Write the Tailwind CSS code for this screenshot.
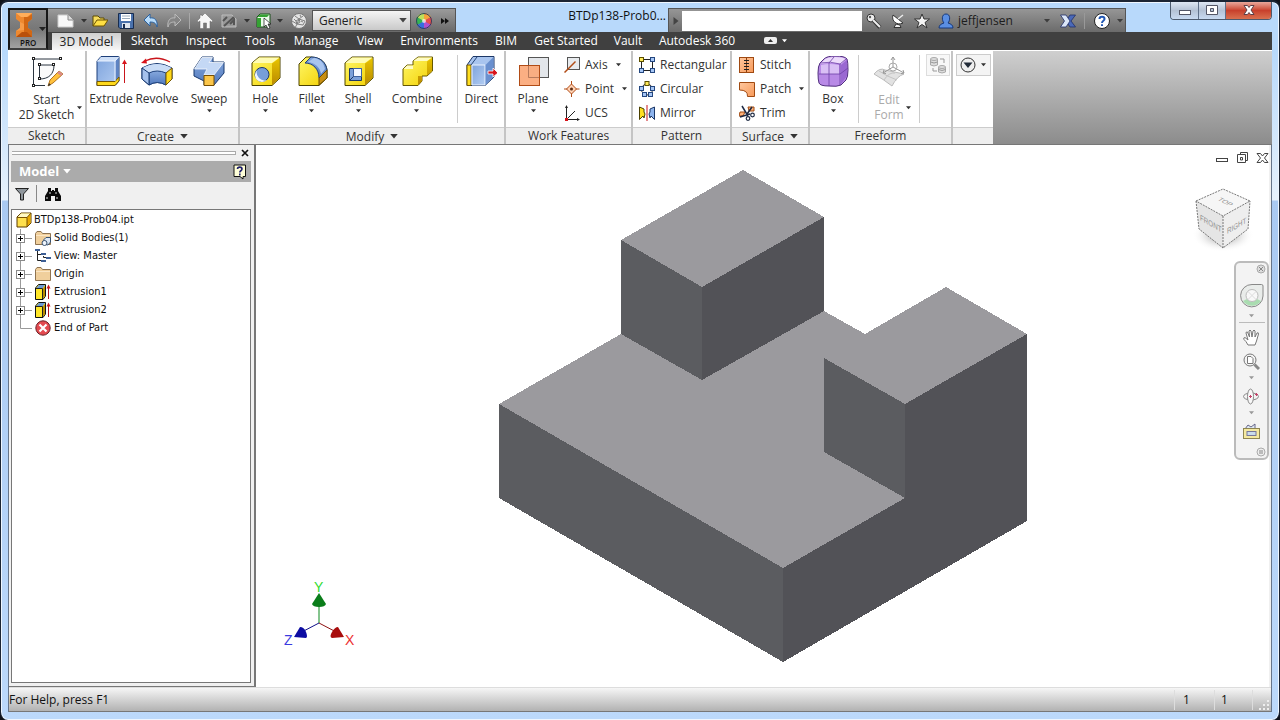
<!DOCTYPE html>
<html lang="en">
<head>
<meta charset="utf-8">
<title>BTDp138-Prob04</title>
<script src="https://cdn.jsdelivr.net/npm/@tailwindcss/browser@4"></script>
</head>
<body class="bg-[#10131a] font-['Open_Sans','Noto_Sans',sans-serif] text-xs text-[#333]">

<!-- Shared symbols -->
<svg width="0" height="0" class="absolute">
  <defs>
    <linearGradient id="yl" x1="0" y1="0" x2="1" y2="1"><stop offset="0" stop-color="#fff86a"/><stop offset="1" stop-color="#f2cf00"/></linearGradient>
    <linearGradient id="yd" x1="0" y1="0" x2="0" y2="1"><stop offset="0" stop-color="#e8c400"/><stop offset="1" stop-color="#b98900"/></linearGradient>
    <linearGradient id="bl" x1="0" y1="0" x2="1" y2="1"><stop offset="0" stop-color="#7ea3dc"/><stop offset="1" stop-color="#b3cdf2"/></linearGradient>
    <linearGradient id="bd" x1="0" y1="0" x2="0" y2="1"><stop offset="0" stop-color="#86a8dd"/><stop offset="1" stop-color="#5179bd"/></linearGradient>
    <linearGradient id="or" x1="0" y1="0" x2="1" y2="1"><stop offset="0" stop-color="#ffc79e"/><stop offset="1" stop-color="#f79a5a"/></linearGradient>
    <symbol id="dn" viewBox="0 0 6 4"><path d="M0 0H6L3 3.5Z" fill="currentColor"/></symbol>
    <symbol id="box" viewBox="0 0 16 16"><path d="M1 5 5 1H15V11L11 15H1Z" fill="#ffe04d" stroke="#5c3c00"/><path d="M1.500 5.500 5 1.500H14.500L11 5.500Z" fill="#fff9c4"/><path d="M11 5.500 14.500 2V11L11 14.500Z" fill="#e9a900"/><path d="M1 5.500H11V15M11 5.500 15 1" fill="none" stroke="#7a5200"/></symbol>
    <symbol id="ext" viewBox="0 0 16 16"><path d="M.5 4 3.500.5H10.500V12L8 15.500H.5Z" fill="#ffe628" stroke="#111"/><path d="M1.500 4 4 1H10L8 4Z" fill="#6d9ad6"/><path d="M8 4.500 10 2V12L8 14.500Z" fill="#b98b00"/><path d="M1 4.500H7.500V15" fill="none" stroke="#222"/><path d="M13.500 15V3" stroke="#b1181d"/><path d="M11.500 4.500 13.500.5 15.500 4.500Z" fill="#c8171d"/></symbol>
    <symbol id="folder" viewBox="0 0 16 16"><path d="M.5 14.500V3.500L2 1.500H6L7.500 3.500H15.500V14.500Z" fill="#f0cf9c" stroke="#8f7350"/><path d="M1 5.500H15" stroke="#fbe6c4"/></symbol>
    <symbol id="plus" viewBox="0 0 16 18"><path d="M4.500 0V18M9 9.500H16" stroke="#9a9a9a" fill="none"/><rect x=".5" y="5.500" width="8" height="8" fill="#fff" stroke="#8a8a8a"/><path d="M2 9.500H7M4.500 7V12" stroke="#000"/></symbol>
  </defs>
</svg>

<div class="flex h-screen flex-col rounded-lg border-x border-t-2 border-[#1b2433] bg-[linear-gradient(to_bottom,#b8d9fb_50px,#e6f1fc_198px,#a9c9f2_199px,#bcd9fb)] shadow-[inset_0_0_0_1px_#eef6ff]">

  <!-- Title bar and ribbon tabs -->
  <header class="mx-[7px] flex h-12 shrink-0">
    <button aria-label="Application menu" class="relative z-10 mt-1.5 h-[42px] w-10 shrink-0 border-2 border-[#171717] border-b-[#3f3f3f] bg-linear-to-b from-[#8a8a8a] via-[#777] to-[#a2a2a2]">
      <svg class="absolute left-0 top-0 h-[38px] w-9" viewBox="0 0 36 38">
        <path d="M6 3H22V9L18 12V18L22 21V27H6V21L10 18V12L6 9Z" fill="#ee8930"/>
        <path d="M6 3H22L17 7H11Z" fill="#ffae5b"/><path d="M14 7H18L22 4V9L18 12V18L22 21V27L14 25Z" fill="#d16714"/><path d="M6 21 10 18V12L14 14V20Z" fill="#f79c48"/><path d="M6 27 12 22H17L22 27Z" fill="#b9500b"/>
        <path d="M29 17H36L32.500 21Z" fill="#222"/>
        <text x="10" y="36" font-family="Open Sans" font-size="8" font-weight="600" fill="#111">PRO</text>
      </svg>
    </button>
    <div class="flex min-w-0 flex-1 flex-col">
      <div class="flex h-[30px] shrink-0">
        <!-- Quick access toolbar -->
        <div class="mt-1.5 flex w-[408px] shrink-0 items-center border-t border-r border-[#555] bg-linear-to-b from-[#9b9b9b] to-[#6a6a6a] text-[#333]">
          <button aria-label="New" class="ml-1 w-7"><svg class="mx-auto h-4 w-5" viewBox="0 0 20 16"><path d="M2 2H12L17 7V14H2Z" fill="#f8f8f8" stroke="#ccc"/><path d="M12 2V7H17" fill="#ddd" stroke="#888"/></svg></button>
          <button aria-label="New options" class="w-2"><svg class="mx-auto h-1 w-1.5"><use href="#dn"/></svg></button>
          <button aria-label="Open" class="w-6"><svg class="mx-auto h-4 w-4" viewBox="0 0 16 16"><path d="M1 13V3H6L8 5H12V8" fill="#f6dc5e" stroke="#5d4a00"/><path d="M1 13 5 7H16L12 13Z" fill="#ffdf44" stroke="#6e5500"/></svg></button>
          <button aria-label="Save" class="w-7"><svg class="mx-auto h-4 w-4" viewBox="0 0 16 16"><path d="M.5.5H15.500V15.500H2L.5 14Z" fill="#4a72ad" stroke="#182c4f"/><path d="M3 1H13V8H3Z" fill="#fff"/><path d="M4 3H12M4 5.500H12" stroke="#9ab"/><path d="M4 10H12V15H4Z" fill="#dfe6f0"/><path d="M6 11V15" stroke="#182c4f" stroke-width="2"/></svg></button>
          <button aria-label="Undo" class="w-[22px]"><svg class="mx-auto h-4 w-4" viewBox="0 0 16 16"><path d="M1 7 7 1V5C12 4 15 8 14 14 13 10 11 9 7 9V13Z" fill="#b8dcfa" stroke="#2860a0"/></svg></button>
          <button aria-label="Redo" class="w-6"><svg class="mx-auto h-4 w-4" viewBox="0 0 16 16"><path d="M15 7 9 1V5C4 4 1 8 2 14 3 10 5 9 9 9V13Z" fill="#858585" stroke="#bbb"/></svg></button>
          <span class="ml-[3px] h-4 w-px bg-[#a8a8a8]"></span>
          <button aria-label="Home" class="w-[30px]"><svg class="mx-auto h-4 w-4" viewBox="0 0 16 16"><path d="M8 0 16 8 14.500 9 13 8V15.500H9.500V10H6.500V15.500H3V8L1.500 9 0 8 3 5V2H5V3Z" fill="#f6f6f6" stroke="#666" stroke-width=".5"/></svg></button>
          <button aria-label="Return" class="w-[18px]"><svg class="mx-auto h-4 w-4" viewBox="0 0 16 16"><path d="M1 2H11L15 6V14H1Z" fill="#999" stroke="#bcbcbc"/><path d="M3 13 13 4M2 8 6 4M9 11 13 7V12" stroke="#555" stroke-width="2" fill="none"/></svg></button>
          <button aria-label="Return options" class="w-[18px]"><svg class="mx-auto h-1 w-1.5"><use href="#dn"/></svg></button>
          <button aria-label="Select" class="w-4"><svg class="mx-auto h-4 w-4" viewBox="0 0 16 16"><path d="M1 4 4 1H14V10L11 14H1Z" fill="#eafbe9" stroke="#184f18"/><path d="M1.500 4 4 1.500H13.500L11 4ZM1 5H5V14H1Z" fill="#35a233"/><path d="M8 5V14L10 12 12 16 14 15 12 11H15Z" fill="#fff" stroke="#111" stroke-width=".7"/></svg></button>
          <button aria-label="Select options" class="w-4"><svg class="mx-auto h-1 w-1.5"><use href="#dn"/></svg></button>
          <button aria-label="Material" class="w-[22px]"><svg class="mx-auto h-4 w-4" viewBox="0 0 16 16"><circle cx="8" cy="8" r="7.500" fill="#e4e4e4" stroke="#777"/><path d="M4 3 8 6 12 3M8 6 6 11 12 12M1 8 6 11 4 15M8 6 14 8 12 12M3 6 5 8M9 2 10 4M10 8 12 9M6 11 9 9 8 6 5 8Z" stroke="#808080" fill="none"/></svg></button>
          <div class="relative ml-0.5 w-[99px]">
            <select aria-label="Appearance" class="block h-[21px] w-full appearance-none border border-[#555] bg-linear-to-b from-[#f5f5f5] to-[#c9c9c9] pl-1.5 text-xs leading-[19px] text-[#222]"><option>Generic</option></select>
            <svg class="pointer-events-none absolute right-1 top-2 h-[5px] w-2 text-[#444]"><use href="#dn"/></svg>
          </div>
          <button aria-label="Colour wheel" class="w-[26px]"><svg class="mx-auto h-4 w-4" viewBox="0 0 16 16"><path d="M8 8V0A8 8 0 0 1 15 4Z" fill="#f6a33a"/><path d="M8 8 15 4A8 8 0 0 1 15 12Z" fill="#ea4b4b"/><path d="M8 8 15 12A8 8 0 0 1 8 16Z" fill="#b04fd0"/><path d="M8 8V16A8 8 0 0 1 1 12Z" fill="#356ee0"/><path d="M8 8 1 12A8 8 0 0 1 1 4Z" fill="#34b552"/><path d="M8 8 1 4A8 8 0 0 1 8 0Z" fill="#bfe05a"/><circle cx="8" cy="8" r="7.500" fill="none" stroke="#31405c"/><circle cx="8" cy="8" r="2" fill="#fff" opacity=".7"/></svg></button>
          <button aria-label="More commands" class="w-4"><svg class="mx-auto h-2 w-2" viewBox="0 0 8 8"><path d="M0 1 4 4 0 7ZM4 1 8 4 4 7Z" fill="#111"/></svg></button>
        </div>
        <h1 class="min-w-0 flex-1 truncate pt-1.5 pr-0.5 text-right text-xs leading-4 text-[#111]">BTDp138-Prob0...</h1>
        <!-- Info centre -->
        <div class="mt-1.5 flex w-[458px] shrink-0 items-center border-x border-t border-[#555] bg-linear-to-b from-[#969696] to-[#6b6b6b] text-[#3d3d3d]">
          <button aria-label="Collapse search" class="w-[13px]"><svg class="mx-auto h-2 w-1.5" viewBox="0 0 5 8"><path d="M0 0 5 4 0 8Z" fill="#444"/></svg></button>
          <input type="search" aria-label="Search" class="h-5 w-[180px] bg-white px-1 outline-none">
          <button aria-label="Subscription" class="w-6"><svg class="mx-auto h-4 w-4" viewBox="0 0 16 16"><circle cx="5" cy="5" r="4" fill="#eee" stroke="#333"/><circle cx="4" cy="4" r="1.200" fill="#555"/><path d="M7 7 14 14.500" stroke="#333" stroke-width="4"/><path d="M7 7 14 14" stroke="#eee" stroke-width="2"/></svg></button>
          <button aria-label="Communication" class="w-6"><svg class="mx-auto h-4 w-4" viewBox="0 0 16 16"><path d="M3 2C1 8 7 13 13 10Z" fill="#fff" stroke="#333"/><path d="M8 6 13 2" stroke="#eee" stroke-width="1.500"/><path d="M4 14.500 6 11 10 12 11 14.500Z" stroke="#333" fill="#eee"/></svg></button>
          <button aria-label="Favorites" class="w-6"><svg class="mx-auto h-4 w-4" viewBox="0 0 16 16"><path d="M8 1 10 6H15.500L11 9.500 13 15 8 11.500 3 15 5 9.500.5 6H6Z" fill="#f4f4f4" stroke="#333"/></svg></button>
          <button class="flex w-[110px] items-center text-xs text-[#1c1c1c]"><svg class="mr-1 ml-1 h-4 w-4" viewBox="0 0 16 16"><path d="M8 1C3 1 4 8 6 10 3 11 1 12 1 15H15C15 12 13 11 10 10 12 8 13 1 8 1Z" fill="#5b8fe3" stroke="#17397c"/></svg>jeffjensen</button>
          <button aria-label="Account menu" class="w-1.5"><svg class="h-1 w-1.5"><use href="#dn"/></svg></button>
          <button aria-label="Exchange" class="ml-2 w-5"><svg class="mx-auto h-4 w-4" viewBox="0 0 16 16"><path d="M10 2H15.500L11 8 15.500 14H10L6 8Z" fill="#4a69b8" stroke="#22306b" stroke-width=".8"/><path d="M.5 2H6L10 8 6 14H.5L4.500 8Z" fill="#dce7f8" stroke="#22306b" stroke-width=".8"/></svg></button>
          <span class="ml-1.5 h-4 w-px bg-[#999]"></span>
          <button aria-label="Help" class="ml-2 w-[18px]"><svg class="h-[18px] w-[18px]" viewBox="0 0 18 18"><circle cx="9" cy="9" r="7.500" fill="#fff" stroke="#222"/><path d="M6.500 7C6.500 4 11.500 4 11.500 7 11.500 9 9 8.500 9 11M9 12.200V14" stroke="#2258b4" stroke-width="2" fill="none"/></svg></button>
          <button aria-label="Help menu" class="ml-1.5 w-1.5"><svg class="h-1 w-1.5"><use href="#dn"/></svg></button>
        </div>
        <!-- Window buttons -->
        <div class="flex w-[146px] shrink-0 justify-end">
          <div class="flex h-[18px] overflow-hidden rounded-b border border-t-0 border-[#4c5a6d]">
            <button aria-label="Minimize" class="w-7 border-r border-[#5f7089] bg-linear-to-b from-[#dfe8f3] via-[#b4c2d5] to-[#c8daf1]"><svg class="mx-auto h-[17px] w-7" viewBox="0 0 28 17"><rect x="8.500" y="8.500" width="11" height="4" fill="#fff" stroke="#535666"/></svg></button>
            <button aria-label="Maximize" class="w-[27px] border-r border-[#5f7089] bg-linear-to-b from-[#dfe8f3] via-[#b4c2d5] to-[#c8daf1]"><svg class="mx-auto h-[17px] w-[26px]" viewBox="0 0 26 17"><path d="M7.500 3.500H18.500V12.500H7.500ZM11.500 6.500V9.500H14.500V6.500Z" fill="#fff" fill-rule="evenodd" stroke="#535666"/></svg></button>
            <button aria-label="Close" class="w-[45px] bg-linear-to-b from-[#e8a79b] via-[#c8402c] to-[#d9704f]"><svg class="mx-auto h-[17px] w-6" viewBox="0 0 24 17"><path d="M7 3.500H10.500L12 5.500 13.500 3.500H17L14 8 17 12.500H13.500L12 10.500 10.500 12.500H7L10 8Z" fill="#fff" stroke="#5d3f47"/></svg></button>
          </div>
        </div>
      </div>
      <nav aria-label="Ribbon tabs" class="flex h-[18px] bg-[#404040] pl-1 leading-4 whitespace-nowrap text-white">
        <button class="mt-px w-[69px] bg-linear-to-b from-[#cfcfcf] to-[#f6f6f6] text-[#222]">3D Model</button>
        <button class="ml-px w-[55px]">Sketch</button>
        <button class="w-[58px]">Inspect</button>
        <button class="w-[50px]">Tools</button>
        <button class="w-[62px]">Manage</button>
        <button class="w-[46px]">View</button>
        <button class="w-[92px]">Environments</button>
        <button class="w-[42px]">BIM</button>
        <button class="w-[78px]">Get Started</button>
        <button class="w-[46px]">Vault</button>
        <button class="w-[92px]">Autodesk 360</button>
        <button aria-label="Minimize ribbon" class="ml-[21px] w-4"><svg class="h-2 w-[13px]" viewBox="0 0 13 8"><rect width="13" height="7" rx="2" fill="#eee"/><path d="M4 5H9L6.500 2Z" fill="#333"/></svg></button>
        <button aria-label="Ribbon options" class="ml-0.5 w-1.5"><svg class="h-1 w-[5px]"><use href="#dn"/></svg></button>
      </nav>
    </div>
  </header>

  <div class="mx-[7px] flex min-h-0 flex-1 flex-col border-x border-[#66758a] bg-[#f0f0f0]">
    <!-- Ribbon -->
    <div class="-mx-px flex h-[95px] shrink-0 border-t border-b border-t-white border-b-[#777] bg-linear-to-b from-[#cfcfcf] to-[#8c8c8c] leading-4 whitespace-nowrap">
      <section class="flex w-[79px] shrink-0 flex-col border-r-2 border-[#c4c4c4] bg-white">
        <div class="flex flex-1">
          <button class="flex w-full flex-col items-center pt-[5px]">
            <svg class="h-8 w-8" viewBox="0 0 32 32"><path d="M2.500 30V3H30M2.500 29.500H14" fill="none" stroke="#2b3540"/><path d="M8.500 9H23C23 18 18 23 8.500 23Z" fill="#fafafa" stroke="#2b3540"/><g fill="#fff" stroke="#222"><rect x="1.500" y="1.500" width="2" height="2"/><rect x="28.500" y="1.500" width="2" height="2"/><rect x="1.500" y="28.500" width="2" height="2"/><rect x="7.500" y="7.500" width="2" height="2"/><rect x="21.500" y="7.500" width="2" height="2"/><rect x="7.500" y="21.500" width="2" height="2"/></g><path d="M17 30 19 24 28 15 32 18 22 27Z" fill="#ffc13d" stroke="#a05a00" stroke-width=".8"/><path d="M28 15 32 18 30 20 26 17Z" fill="#d98a88"/><path d="M17 30 18 27 20 29Z" fill="#333"/></svg>
            <span class="mt-1 leading-[15px]">Start<br>2D Sketch</span>
          </button>
          <svg class="-ml-2 mt-[55px] h-1 w-[5px] shrink-0"><use href="#dn"/></svg>
        </div>
        <h2 class="h-[17px] border-t border-[#ccc] bg-[#eee] text-center leading-[15px]">Sketch</h2>
      </section>

      <section class="flex w-[153px] shrink-0 flex-col border-r-2 border-[#c4c4c4] bg-white">
        <div class="flex flex-1 pl-px">
          <button class="flex w-[46px] flex-col items-center pt-[5px]">
            <svg class="h-8 w-8" viewBox="0 0 32 32"><path d="M2 5 6 .5H24V25L20 29.500H2Z" fill="url(#bl)" stroke="#1d3f7a"/><path d="M2.500 5 6 1H23.500L20 5Z" fill="#cfe0f8"/><path d="M20.500 5 23.500 1.500V25L20.500 29Z" fill="#5e84c4"/><path d="M2 25.500H20L24 21V25L20 29.500H2Z" fill="#ffd91a" stroke="#775800"/><path d="M2 5H20V25M20 5 24 .5" fill="none" stroke="#eaf2ff"/><path d="M29.500 27V6" stroke="#c9151b"/><path d="M27 8 29.500 3.500 32 8Z" fill="#d8141b"/></svg>
            <span class="mt-[3px]">Extrude</span>
          </button>
          <button class="flex w-[46px] flex-col items-center pt-[5px]">
            <svg class="h-8 w-8" viewBox="0 0 32 32"><path d="M1 12Q16 3 31 12V23L25 29Q16 24 8 29L1 23Z" fill="#91b1e3" stroke="#17386f"/><path d="M1.500 12Q16 4 30.500 12L25 17Q16 13 8 17Z" fill="#c9dcf6"/><path d="M8 17Q16 13 25 17V29Q16 24 8 29Z" fill="url(#bd)" stroke="#21447e"/><path d="M1 12 8 17V29L1 23Z" fill="#a5c1ec" stroke="#17386f"/><path d="M25 17 31 12V23L25 29Z" fill="#ffd91a" stroke="#775800"/><path d="M4 5Q16-1 29 6" fill="none" stroke="#c9151b" stroke-width="1.300"/><path d="M0 7 5 2.500 6 7.500Z" fill="#d8141b"/></svg>
            <span class="mt-[3px]">Revolve</span>
          </button>
          <button class="flex w-[58px] flex-col items-center pt-[5px]">
            <svg class="h-8 w-8" viewBox="0 0 32 32"><path d="M1 13 9 1H20V6H31V17L21 29H11V25L1 20Z" fill="url(#bd)" stroke="#17386f"/><path d="M1.500 13 9 1.500H19.500L16 6.500H30.500L21 19H11L14 13Z" fill="#c4d8f5" stroke="#fff" stroke-width=".7"/><path d="M11 19.500H21V29.500H11Z" fill="#fbc64a" stroke="#774e00"/></svg>
            <span class="mt-[3px]">Sweep</span>
            <svg class="mt-0.5 h-1 w-[5px]"><use href="#dn"/></svg>
          </button>
        </div>
        <h2 class="flex h-[17px] items-center justify-center gap-1.5 border-t border-[#ccc] bg-[#eee] leading-[15px]">Create <svg class="h-[5px] w-2"><use href="#dn"/></svg></h2>
      </section>

      <section class="flex w-[266px] shrink-0 flex-col border-r-2 border-[#c4c4c4] bg-white">
        <div class="flex flex-1 pl-0.5">
          <button class="flex w-[47px] flex-col items-center pt-[5px]">
            <svg class="h-8 w-8" viewBox="0 0 32 32"><path d="M3 7 10 1H31V22L23 29.500H3Z" fill="url(#yl)" stroke="#4d4300"/><path d="M3.500 7 10 1.500H30.500L23 7Z" fill="#fffcb5"/><path d="M23 7.500 30.500 2V22L23 29Z" fill="url(#yd)"/><circle cx="13" cy="18.500" r="7" fill="#779ed8" stroke="#1c3766"/><path d="M8 14A7 7 0 0 0 18 24 8 8 0 0 1 8 14Z" fill="#f0f6ff"/></svg>
            <span class="mt-[3px]">Hole</span>
            <svg class="mt-0.5 h-1 w-[5px]"><use href="#dn"/></svg>
          </button>
          <button class="flex w-[47px] flex-col items-center pt-[5px]">
            <svg class="h-8 w-8" viewBox="0 0 32 32"><path d="M3 8 10 1C24 0 30 6 31 14V22L23 29.500H3Z" fill="url(#yl)" stroke="#4d4300"/><path d="M9 7 15 1C25 1 30 7 31 14L23 22C23 13 17 7 9 7Z" fill="url(#bd)" stroke="#1d3f7a"/><path d="M12 6 18 2C25 3 28 8 29 13L25 18C24 11 19 7 12 6Z" fill="#a9c5ef"/><path d="M23 22 31 14V22L23 29Z" fill="#c78f13" stroke="#6e4d00"/></svg>
            <span class="mt-[3px]">Fillet</span>
            <svg class="mt-0.5 h-1 w-[5px]"><use href="#dn"/></svg>
          </button>
          <button class="flex w-[47px] flex-col items-center pt-[5px]">
            <svg class="h-8 w-8" viewBox="0 0 32 32"><path d="M3 7 10 1H31V22L23 29.500H3Z" fill="url(#yl)" stroke="#4d4300"/><path d="M3.500 7 10 1.500H30.500L23 7Z" fill="#fffcb5"/><path d="M23 7.500 30.500 2V22L23 29Z" fill="url(#yd)"/><path d="M7.500 12.500H19.500V24.500H7.500Z" fill="#7ba0d9" stroke="#1c3766"/><path d="M11.500 12.500H19.500V20.500H11.500Z" fill="#f4f8ff" stroke="#40639f"/><path d="M7.500 24.500 11.500 20.500" stroke="#1c3766"/></svg>
            <span class="mt-[3px]">Shell</span>
            <svg class="mt-0.5 h-1 w-[5px]"><use href="#dn"/></svg>
          </button>
          <button class="flex w-[72px] flex-col items-center pt-[5px]">
            <svg class="h-8 w-8" viewBox="0 0 32 32"><path d="M2 13 6 9H12V5L17 1H31.500V15L26 20H21V25L17 29.500H2Z" fill="url(#yl)" stroke="#665800"/><path d="M2.500 13 6 9.500H12V13ZM12.500 5 17 1.500H31L26 5Z" fill="#fffcc4"/><path d="M26 5.500 31 2V15L26 19.500ZM17 20H21V25L17 29Z" fill="url(#yd)"/></svg>
            <span class="mt-[3px]">Combine</span>
            <svg class="mt-0.5 h-1 w-[5px]"><use href="#dn"/></svg>
          </button>
          <span class="my-1 ml-1 w-px bg-[#ccc]"></span>
          <button class="ml-px flex w-[46px] flex-col items-center pt-[5px]">
            <svg class="h-8 w-8" viewBox="0 0 32 32"><path d="M2 9 8 .5H29V21L20 29.500H2Z" fill="#a9c5ef" stroke="#1c3766"/><path d="M2 9H6V29.500H2Z" fill="#ffdf20" stroke="#775800"/><path d="M7 9H20V29H7Z" fill="url(#bl)" stroke="#eaf2ff"/><path d="M20.500 9 28.500 1V21L20.500 29Z" fill="#6a90cf"/><path d="M6 9 12 1" stroke="#26457a"/><path d="M23 15H28V12L33 17 28 21V18H23Z" fill="#d8141b" stroke="#fff" stroke-width=".8"/></svg>
            <span class="mt-[3px]">Direct</span>
          </button>
        </div>
        <h2 class="flex h-[17px] items-center justify-center gap-1.5 border-t border-[#ccc] bg-[#eee] leading-[15px]">Modify <svg class="h-[5px] w-2"><use href="#dn"/></svg></h2>
      </section>

      <section class="flex w-[127px] shrink-0 flex-col border-r-2 border-[#c4c4c4] bg-white">
        <div class="flex flex-1 pl-1">
          <button class="flex w-[46px] flex-col items-center pt-[5px]">
            <svg class="h-8 w-8" viewBox="0 0 32 32"><rect x="11.500" y="1.500" width="20" height="20" fill="#e3e6ea" stroke="#555"/><rect x="2.500" y="9.500" width="20" height="20" fill="#fba97a" fill-opacity=".93" stroke="#b14c16"/><path d="M11.500 10V21.500H22" fill="none" stroke="#b77a5b"/></svg>
            <span class="mt-[3px]">Plane</span>
            <svg class="mt-0.5 h-1 w-[5px]"><use href="#dn"/></svg>
          </button>
          <div class="ml-2 flex flex-col pt-0.5">
            <button class="flex h-6 items-center"><svg class="mr-[5px] h-4 w-4" viewBox="0 0 16 16"><rect x="3.500" y=".5" width="12" height="12" fill="#e8ebee" stroke="#555"/><path d="M.5 15.500 11.500 4.500" stroke="#b14c16" stroke-width="1.500"/></svg>Axis<svg class="ml-2 h-1 w-[5px]"><use href="#dn"/></svg></button>
            <button class="flex h-6 items-center"><svg class="mr-[5px] h-4 w-4" viewBox="0 0 16 16"><path d="M7.500 0V16M0 8H15.500" stroke="#b14c16"/><path d="M7.500 3 12.500 8 7.500 13 2.500 8Z" fill="#ffd3b5" stroke="#b14c16"/><circle cx="7.500" cy="8" r="1.500" fill="#5c2a10"/></svg>Point<svg class="ml-2 h-1 w-[5px]"><use href="#dn"/></svg></button>
            <button class="flex h-6 items-center"><svg class="mr-[5px] h-4 w-4" viewBox="0 0 16 16"><path d="M2.500 1V14.500H15M2.500 14.500 11 6" fill="none" stroke="#222"/><path d="M1 3 2.500 0 4 3M13 13 16 14.500 13 16" fill="#222"/><rect x="1" y="13" width="3" height="3" fill="#d8141b"/></svg>UCS</button>
          </div>
        </div>
        <h2 class="h-[17px] border-t border-[#ccc] bg-[#eee] text-center leading-[15px]">Work Features</h2>
      </section>

      <section class="flex w-[99px] shrink-0 flex-col border-r-2 border-[#c4c4c4] bg-white">
        <div class="flex flex-1 flex-col items-start pt-0.5 pl-1.5">
          <button class="flex h-6 items-center"><svg class="mr-[5px] h-4 w-4" viewBox="0 0 16 16"><path d="M5 2.500H11M2.500 5V11M5 13.500H11M13.500 5V11" stroke="#222"/><g fill="#a6c6f5" stroke="#24477f"><rect x="11.500" y=".5" width="4" height="4"/><rect x=".5" y="11.500" width="4" height="4"/><rect x="11.500" y="11.500" width="4" height="4"/></g><rect x=".5" y=".5" width="4" height="4" fill="#ffe95a" stroke="#5c5000"/></svg>Rectangular</button>
          <button class="flex h-6 items-center"><svg class="mr-[5px] h-4 w-4" viewBox="0 0 16 16"><circle cx="8" cy="8.500" r="5.500" fill="none" stroke="#222"/><g fill="#a6c6f5" stroke="#24477f"><rect x=".5" y="5.500" width="4" height="4"/><rect x="11.500" y="5.500" width="4" height="4"/><rect x="3.500" y="11.500" width="4" height="4"/><rect x="9.500" y="11.500" width="4" height="4"/></g><rect x="6" y=".5" width="4" height="4" fill="#ffe95a" stroke="#5c5000"/></svg>Circular</button>
          <button class="flex h-6 items-center"><svg class="mr-[5px] h-4 w-4" viewBox="0 0 16 16"><path d="M.5 2 5 4V7L6 9 5 13 4 11 .5 14.500Z" fill="#ffdf20" stroke="#4a3f00"/><path d="M15.500 2 11 4V7L10 9 11 13 12 11 15.500 14.500Z" fill="#8db4ee" stroke="#1c3766"/><path d="M8 0V16" stroke="#c9151b"/></svg>Mirror</button>
        </div>
        <h2 class="h-[17px] border-t border-[#ccc] bg-[#eee] text-center leading-[15px]">Pattern</h2>
      </section>

      <section class="flex w-[78px] shrink-0 flex-col border-r-2 border-[#c4c4c4] bg-white">
        <div class="flex flex-1 flex-col items-start pt-0.5 pl-[7px]">
          <button class="flex h-6 items-center"><svg class="mr-[5px] h-4 w-4" viewBox="0 0 16 16"><rect x=".5" y=".5" width="14" height="15" fill="url(#or)" stroke="#a04a12"/><path d="M7.500 1V15" stroke="#8a3f0f"/><path d="M5 3.500H10M5 6.500H10M5 9.500H10M5 12.500H10" stroke="#222"/></svg>Stitch</button>
          <button class="flex h-6 items-center"><svg class="mr-[5px] h-4 w-4" viewBox="0 0 16 16"><path d="M.5 1.500H15.500V15.500H8.500Q9 9 .5 9Z" fill="url(#or)" stroke="#a04a12"/></svg>Patch<svg class="ml-2 h-1 w-[5px]"><use href="#dn"/></svg></button>
          <button class="flex h-6 items-center"><svg class="mr-[5px] h-4 w-4" viewBox="0 0 16 16"><path d="M9 2H15V6H10ZM1 7H6L4 11H0Z" fill="#ffb27a" stroke="#a04a12"/><path d="M3 1 9 11M1 12 11 9M13 2 8 9" stroke="#1e2a44" stroke-width="1.500"/><circle cx="9" cy="13.500" r="1.800" fill="#fff" stroke="#1e2a44" stroke-width="1.200"/><circle cx="13.500" cy="10" r="1.800" fill="#fff" stroke="#1e2a44" stroke-width="1.200"/></svg>Trim</button>
        </div>
        <h2 class="flex h-[17px] items-center justify-center gap-1.5 border-t border-[#ccc] bg-[#eee] leading-[15px]">Surface <svg class="h-[5px] w-2"><use href="#dn"/></svg></h2>
      </section>

      <section class="flex w-[143px] shrink-0 flex-col border-r-2 border-[#c4c4c4] bg-white">
        <div class="flex flex-1">
          <button class="flex w-[46px] flex-col items-center pt-[5px]">
            <svg class="h-8 w-8" viewBox="0 0 32 32"><path d="M7 3Q10 0 18 0 28 0 30 3 31 6 31 14 31 21 29 24L24 29Q20 31 12 30 3 30 2 27 1 24 1 17 1 10 3 7Z" fill="#b88ae6" stroke="#52307f"/><path d="M8 3Q11 1 18 1 26 1 29 3L24 8Q14 6 3 8Z" fill="#eddcfb"/><path d="M4 9Q12 7 22 9V18H4Z" fill="#d9bff5"/><path d="M24 9 30 4V20L24 28Z" fill="#9a68d2"/><path d="M2 18H23L31 12M12 7V30M12 7 17 1M23 8V29M23 8 29 3M3 7Q14 5 23 8" fill="none" stroke="#6c3fa6" stroke-width=".8"/></svg>
            <span class="mt-[3px]">Box</span>
            <svg class="mt-0.5 h-1 w-[5px]"><use href="#dn"/></svg>
          </button>
          <span class="my-1 ml-0.5 w-px bg-[#ccc]"></span>
          <button disabled class="flex w-[60px] flex-col items-center pt-[5px] text-[#aaa]">
            <svg class="h-8 w-8" viewBox="0 0 32 32"><path d="M1 18Q7 11 12 14L31 18Q24 20 19 30 10 23 1 18Z" fill="#e2e2e2" stroke="#bbb"/><path d="M6 15Q13 20 24 24M11 24Q16 16 22 17" fill="none" stroke="#c4c4c4"/><path d="M20 11V1M18 4 20 1 22 4M20 11 31 17M28 17.500 31 17 30 14M20 11 10 17M11 14 10 17 13 17.500" fill="none" stroke="#999"/><circle cx="20" cy="11" r="4" fill="none" stroke="#aaa"/></svg>
            <span class="mt-1 leading-[15px]">Edit<br>Form</span>
          </button>
          <svg class="-ml-[13px] mr-2 mt-[55px] h-1 w-[5px] shrink-0"><use href="#dn"/></svg>
          <span class="my-1 w-px bg-[#ccc]"></span>
          <button disabled aria-label="Convert" class="mt-[3px] ml-1.5 h-[22px] w-6 border border-[#ddd] bg-[#f8f8f8]"><svg class="mx-auto h-[18px] w-[18px]" viewBox="0 0 18 18"><g fill="#ddd" stroke="#aaa"><path d="M1.500 3V9Q5 11 8.500 9V3"/><ellipse cx="5" cy="3" rx="3.500" ry="1.500"/><path d="M9.500 11V16Q13 18 16.500 16V11"/><ellipse cx="13" cy="11" rx="3.500" ry="1.500"/></g><path d="M15 7V3H11M4 12V15H8M1.500 6Q5 8 8.500 6M9.500 13.500Q13 15.500 16.500 13.500" fill="none" stroke="#999"/></svg></button>
        </div>
        <h2 class="h-[17px] border-t border-[#ccc] bg-[#eee] text-center leading-[15px]">Freeform</h2>
      </section>

      <section class="flex w-10 shrink-0 flex-col bg-white">
        <div class="flex-1 pt-[3px] pl-[3px]">
          <button aria-label="Show panels" class="flex h-[22px] w-[35px] items-center justify-between border border-[#ccc] bg-[#f4f4f4] pr-1 pl-[3px]"><svg class="h-4 w-4" viewBox="0 0 16 16"><circle cx="8" cy="8" r="7" fill="#eee" stroke="#333"/><path d="M3.500 5.500H12.500L8 11Z" fill="#222b38"/></svg><svg class="h-1 w-[5px]"><use href="#dn"/></svg></button>
        </div>
        <div class="h-[17px] border-t border-[#ccc] bg-[#eee]"></div>
      </section>
    </div>

    <main class="flex min-h-0 flex-1">
      <!-- Model browser -->
      <aside class="flex w-[247px] shrink-0 flex-col border-r-2 border-b border-[#777] bg-[#f0f0f0] pr-[3px] pb-[3px] pl-0.5 font-['DejaVu_Sans_Condensed','Noto_Sans',sans-serif] text-[11px] text-[#111]">
        <div class="flex h-4 shrink-0 items-center pl-px">
          <span class="h-1 flex-1 border-y border-r border-[#aaa] bg-white"></span>
          <button aria-label="Close browser" class="ml-0.5 w-[13px]"><svg class="mx-auto h-2 w-2" viewBox="0 0 8 8"><path d="M1 1 7 7M7 1 1 7" stroke="#111" stroke-width="1.700"/></svg></button>
        </div>
        <div class="flex h-[21px] shrink-0 items-center bg-[#ababab] pr-1 pl-2 text-white">
          <button class="flex items-center gap-1 font-['Open_Sans',sans-serif] text-[13px] font-bold">Model<svg class="h-[5px] w-2"><use href="#dn"/></svg></button>
          <button aria-label="Browser help" class="ml-auto"><svg class="h-4 w-[14px]" viewBox="0 0 14 16"><path d="M1 1H12.500V12.500H10L10 15 7 12.500H1Z" fill="#ffffd8" stroke="#111"/><path d="M4.500 5C4.500 2.500 9 2.500 9 5 9 7 6.800 6.500 6.800 8.500M6.800 9.500V11.500" fill="none" stroke="#1d1d6c" stroke-width="1.600"/></svg></button>
        </div>
        <div class="flex h-[27px] shrink-0 items-center pb-1 pl-1">
          <button aria-label="Filter"><svg class="h-[14px] w-[14px]" viewBox="0 0 14 14"><path d="M.5 1.500H13.500L8.500 7V13H5.500V7Z" fill="#8f969c" stroke="#222"/></svg></button>
          <span class="mx-[7px] h-[17px] w-px bg-[#888]"></span>
          <button aria-label="Find" class="ml-px"><svg class="h-[14px] w-4" viewBox="0 0 16 14"><path d="M3 1H6V4H7V3H9V4H10V1H13V4L16 9V14H10V9H6V14H0V9L3 4Z" fill="#0b0b0b"/><path d="M2 10V12M12 10V12M5 5V7M11 5V7" stroke="#ddd"/></svg></button>
        </div>
        <ul role="tree" class="min-h-0 flex-1 border border-[#777] bg-white pt-px pl-1">
          <li role="treeitem" class="flex h-[18px] items-center"><svg class="mr-0.5 h-4 w-4"><use href="#box"/></svg>BTDp138-Prob04.ipt</li>
          <li role="treeitem" class="flex h-[18px] items-center"><button aria-label="Expand Solid Bodies"><svg class="mr-[3px] h-[18px] w-4"><use href="#plus"/></svg></button><svg class="mr-[3px] h-4 w-4" viewBox="0 0 16 16"><use href="#folder" width="16" height="16"/><path d="M9 9.500 11 7.500H15.500V12L13 15 9 14Z" fill="#dce8f6" stroke="#36506f"/><circle cx="9.500" cy="13" r="2.500" fill="#eef4fb" stroke="#36506f"/></svg>Solid Bodies(1)</li>
          <li role="treeitem" class="flex h-[18px] items-center"><button aria-label="Expand View"><svg class="mr-[3px] h-[18px] w-4"><use href="#plus"/></svg></button><svg class="mr-[3px] h-4 w-4" viewBox="0 0 16 16"><path d="M2.500 3V12.500H6M2.500 6.500H6M8.500 8V9.500H12" fill="none" stroke="#222"/><path d="M0 1H5V3H0ZM6 5H11V7H6ZM11 9H16V11H11ZM6 12H11V14H6Z" fill="#3d5f95"/></svg>View: Master</li>
          <li role="treeitem" class="flex h-[18px] items-center"><button aria-label="Expand Origin"><svg class="mr-[3px] h-[18px] w-4"><use href="#plus"/></svg></button><svg class="mr-[3px] h-4 w-4"><use href="#folder"/></svg>Origin</li>
          <li role="treeitem" class="flex h-[18px] items-center"><button aria-label="Expand Extrusion1"><svg class="mr-[3px] h-[18px] w-4"><use href="#plus"/></svg></button><svg class="mr-[3px] h-4 w-4"><use href="#ext"/></svg>Extrusion1</li>
          <li role="treeitem" class="flex h-[18px] items-center"><button aria-label="Expand Extrusion2"><svg class="mr-[3px] h-[18px] w-4"><use href="#plus"/></svg></button><svg class="mr-[3px] h-4 w-4"><use href="#ext"/></svg>Extrusion2</li>
          <li role="treeitem" class="flex h-[18px] items-center"><svg class="mr-[3px] h-[18px] w-4" viewBox="0 0 16 18"><path d="M4.500 0V9.500H16" stroke="#9a9a9a" fill="none"/></svg><svg class="mr-[3px] h-4 w-4" viewBox="0 0 16 16"><circle cx="8" cy="8" r="7.200" fill="#e34a50" stroke="#6b2328"/><path d="M4.500 4.500 11.500 11.500M11.500 4.500 4.500 11.500" stroke="#fff" stroke-width="2.200"/></svg>End of Part</li>
        </ul>
      </aside>

      <!-- Graphics window -->
      <div class="relative mr-0.5 min-w-0 flex-1 bg-white">
        <svg class="h-full w-full" viewBox="256 145 1013 542" shape-rendering="crispEdges" role="img" aria-label="Part model">
          <path d="M499 404 621 334 702 380 824 311 865 334 824 358 824 452 905 498 783 568Z" fill="#9b9a9e"/>
          <path d="M499 404 783 568 783 662 499 498Z" fill="#5b5c60"/>
          <path d="M783 568 905 498 905 404 1027 334 1027 521 783 662Z" fill="#525257"/>
          <path d="M865 334 946 287 1027 334 905 404 824 358Z" fill="#9b9a9e"/>
          <path d="M824 358 905 404 905 498 824 452Z" fill="#5b5c60"/>
          <path d="M621 240 743 170 824 217 702 287Z" fill="#9b9a9e"/>
          <path d="M621 240 702 287 702 380 621 334Z" fill="#5b5c60"/>
          <path d="M702 287 824 217 824 311 702 380Z" fill="#525257"/>
        </svg>
        <svg class="absolute bottom-[37px] left-6 h-[72px] w-20" viewBox="0 0 80 72" font-family="Liberation Sans" font-size="14">
          <path d="M39 45V20" stroke="#0b8a1c"/><path d="M39 45 60 56" stroke="#8e1111"/><path d="M39 45 18 56" stroke="#10108a"/>
          <path d="M32 26 39 15 46 26Q45 29 39 29T32 26Z" fill="#0a7d1a"/>
          <path d="M64 59 58 49Q55 49 52 54T52 60Z" fill="#a80d0d"/>
          <path d="M14 59 20 49Q24 49 26 54T26 60Z" fill="#0c0ca2"/>
          <text x="34" y="14" fill="#31dc31">Y</text><text x="65" y="67" fill="#ec3030">X</text><text x="4" y="67" fill="#3a3ae0">Z</text>
        </svg>
        <div class="absolute top-[7px] -right-0.5 flex">
          <button aria-label="Minimize document"><svg class="h-3 w-5" viewBox="0 0 20 12"><rect x="3.500" y="6.500" width="11" height="3" fill="#fff" stroke="#444"/></svg></button>
          <button aria-label="Restore document"><svg class="h-3 w-5" viewBox="0 0 20 12"><path d="M7.500.5H14.500V8.500H7.500Z" fill="#fff" stroke="#444"/><path d="M4.500 2.500H12.500V10.500H4.500ZM7.500 5.500V8H9.500V5.500Z" fill="#fff" fill-rule="evenodd" stroke="#444"/></svg></button>
          <button aria-label="Close document"><svg class="h-3 w-[18px]" viewBox="0 0 18 12"><path d="M4 1.500H7.500L9.500 4 11.500 1.500H15L11.500 6 15 10.500H11.500L9.500 8 7.500 10.500H4L7.500 6Z" fill="#fff" stroke="#444"/></svg></button>
        </div>
        <!-- View cube -->
        <svg class="absolute top-[37px] right-[13px] h-[72px] w-[68px]" viewBox="0 0 68 72" font-family="Liberation Sans" font-size="9" fill="#8f8f8f">
          <defs><radialGradient id="sh"><stop offset="0" stop-color="#777"/><stop offset="1" stop-color="#fff" stop-opacity="0"/></radialGradient></defs>
          <ellipse cx="35" cy="53" rx="31" ry="17" fill="url(#sh)"/>
          <path d="M8 19 35 7 62 19 35 34Z" fill="#f6f6f6"/><path d="M8 19 35 34V66L11 47Z" fill="#e5e5e5"/><path d="M62 19 35 34V66L60 47Z" fill="#eee"/>
          <path d="M8 19 35 7 62 19 35 34ZM8 19 11 47 35 66 60 47 62 19M35 34V66" fill="none" stroke="#777" stroke-dasharray="2 1"/>
          <text font-size="8" transform="matrix(.8 .38 -.7 .45 29 18)">TOP</text>
          <text font-size="8" transform="matrix(.78 .45 0 1 12 38)">FRONT</text>
          <text font-size="8" transform="matrix(.78 -.45 0 1 39 52)">RIGHT</text>
        </svg>
        <!-- Navigation bar -->
        <div role="toolbar" aria-label="Navigation bar" class="absolute top-[116px] right-0 flex w-[35px] flex-col items-center rounded-md border-2 border-[#bbb] bg-[#f3f3f3] text-[#999]">
          <button aria-label="Close navigation bar" class="self-end"><svg class="h-3 w-3" viewBox="0 0 12 12"><circle cx="6" cy="6" r="4" fill="#ddd" stroke="#aaa"/><path d="M4 4 8 8M8 4 4 8" stroke="#888"/></svg></button>
          <button aria-label="Steering wheel" class="mt-2"><svg class="h-[26px] w-[26px]" viewBox="0 0 26 26"><path d="M13 1.500H22.500Q24 1.500 24 3V13A11.200 11.200 0 1 1 13 1.500Z" fill="#e9ecea" stroke="#888"/><path d="M4 18A11 11 0 0 0 22 18L18 16A6 6 0 0 1 8 16Z" fill="#a9dcb0"/><circle cx="13" cy="12.500" r="6" fill="#f8f8f8" stroke="#bbb"/><path d="M9 8.500 17 16.500M17 8.500 9 16.500" stroke="#ddd"/></svg></button>
          <svg class="mt-[5px] h-1 w-[5px]"><use href="#dn"/></svg>
          <span class="mt-1 h-px w-[26px] bg-[#bbb]"></span>
          <button aria-label="Pan" class="mt-1.5"><svg class="h-[17px] w-[17px]" viewBox="0 0 17 17"><path d="M5 16Q3 12 1 10.500 0 8.500 2 8.500L5 11 3 4Q3 2.500 4.500 3L6.500 8 6 2Q7 0 8 2L9 8 10 2Q11 0 12 2V8L14 4Q15.500 3 15.500 5L13.500 12 12 16Z" fill="#fff" stroke="#777"/></svg></button>
          <button aria-label="Zoom" class="mt-[7px]"><svg class="h-[17px] w-[17px]" viewBox="0 0 17 17"><circle cx="7" cy="7" r="6" fill="#f4f4f4" stroke="#777"/><path d="M4.500 3.500H8L10 5.500V10.500H4.500Z" fill="#fff" stroke="#777"/><path d="M11.500 11.500 16 16" stroke="#888" stroke-width="3"/></svg></button>
          <svg class="mt-1.5 h-1 w-[5px]"><use href="#dn"/></svg>
          <button aria-label="Orbit" class="mt-2"><svg class="h-[17px] w-[17px]" viewBox="0 0 17 17"><ellipse cx="8" cy="8.500" rx="7.500" ry="3.500" fill="none" stroke="#888"/><ellipse cx="7.500" cy="8.500" rx="3" ry="7.500" fill="#f8f8f8" stroke="#888"/><path d="M6 8.500H9M7.500 7V10M12 6.500H15M13.500 5V8" stroke="#c4436a"/></svg></button>
          <svg class="mt-1.5 h-1 w-[5px]"><use href="#dn"/></svg>
          <button aria-label="Look at" class="mt-2"><svg class="h-[17px] w-[17px]" viewBox="0 0 17 17"><path d="M2 6 5 2 8 4 12 1V6Z" fill="#dfe9f2" stroke="#668"/><rect x=".5" y="5.500" width="16" height="10" fill="#f4e9a0" stroke="#8e8550"/><rect x="4" y="8.500" width="9" height="4" fill="#c9dcec" stroke="#779"/></svg></button>
          <button aria-label="Navigation bar options" class="mt-1.5 self-end"><svg class="h-3 w-3" viewBox="0 0 12 12"><circle cx="6" cy="6" r="4" fill="#eee" stroke="#aaa"/><path d="M4 5H8M4 7H8" stroke="#888"/></svg></button>
        </div>
      </div>
    </main>

    <!-- Status bar -->
    <footer class="flex h-[25px] shrink-0 items-center border-t border-b border-t-[#ddd] border-b-[#777] bg-linear-to-b from-[#f6f6f6] to-[#b2b2b2] text-[#111]">
      <span class="flex-1 pt-px whitespace-nowrap">For Help, press F1</span>
      <span class="w-10 border-l border-[#ddd] pl-2 leading-5">1</span>
      <span class="w-[38px] border-l border-[#ddd] pl-1.5 leading-5">1</span>
      <span class="flex h-5 w-[19px] items-end justify-end border-l border-[#ddd]"><svg class="mr-0.5 h-2.5 w-2.5" viewBox="0 0 10 10"><path d="M8 0H10V2H8ZM4 4H6V6H4ZM8 4H10V6H8ZM0 8H2V10H0ZM4 8H6V10H4ZM8 8H10V10H8Z" fill="#eee"/></svg></span>
    </footer>
  </div>
  <div class="h-2 shrink-0"></div>
</div>
</body>
</html>
